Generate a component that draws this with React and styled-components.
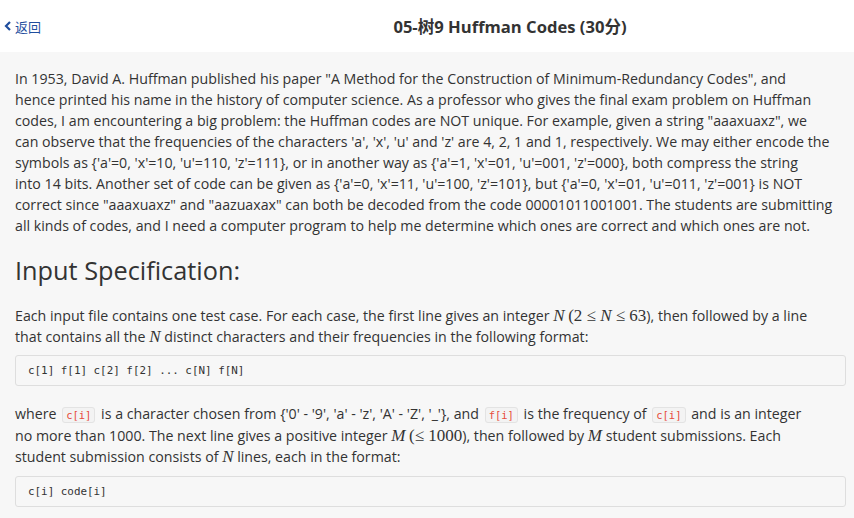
import React from "react";
import styled, { createGlobalStyle } from "styled-components";

const GlobalStyle = createGlobalStyle`
  html, body {
    margin: 0;
    padding: 0;
    background: #f7f7f7;
    font-family: "Open Sans", "Noto Sans", "Noto Sans CJK SC", sans-serif;
    color: #333;
  }
`;

const Header = styled.div`
  height: 52px;
  background: #fff;
  display: flex;
  align-items: center;
`;

const Back = styled.a`
  display: flex;
  align-items: center;
  gap: 3px;
  width: 166px;
  padding-left: 4px;
  box-sizing: border-box;
  color: #1f4e9e;
  font-size: 13px;
  font-family: "Noto Sans CJK SC", sans-serif;
  text-decoration: none;
  cursor: pointer;
`;

const Title = styled.h1`
  flex: 1;
  margin: 0;
  text-align: center;
  font-size: 16.6px;
  font-weight: 700;
  color: #333;
  font-family: "Open Sans", "Noto Sans CJK SC", sans-serif;
`;

const Content = styled.div`
  padding: 16px 0 0 15px;
`;

const Para = styled.p`
  margin: 0 0 ${(p) => p.$mb || 0}px;
  font-size: 14.2px;
  line-height: ${(p) => p.$lh || 21}px;
  white-space: nowrap;
`;

const Heading = styled.h2`
  margin: 18px 0 19px;
  font-size: 25.3px;
  font-weight: 400;
  line-height: 32px;
  color: #333;
`;

const CodeBlock = styled.pre`
  margin: 0 0 ${(p) => p.$mb || 0}px;
  padding: 8px 12px;
  height: 31px;
  box-sizing: border-box;
  background: #f7f7f7;
  border: 1px solid #dedede;
  border-radius: 3px;
  font-family: "DejaVu Sans Mono", "Liberation Mono", monospace;
  font-size: 10.9px;
  line-height: 14px;
  color: #333;
  width: 831px;
`;

const Code = styled.code`
  font-family: "DejaVu Sans Mono", "Liberation Mono", monospace;
  font-size: 10.5px;
  line-height: 1;
  color: #e74c3c;
  background: #f3f3f3;
  border: 1px solid #e3e3e3;
  border-radius: 3px;
  padding: 1px 3px;
  margin: 0 2px;
`;

const M = styled.span`
  font-family: "Liberation Serif", "DejaVu Serif", serif;
  font-style: ${(p) => (p.$up ? "normal" : "italic")};
  font-size: 17px;
  line-height: 1;
`;

export default function App() {
  return (
    <>
      <GlobalStyle />
      <Header>
        <Back>
          <svg width="8" height="10" viewBox="0 0 8 10">
            <path d="M6 1 L2 5 L6 9" stroke="#1f4e9e" strokeWidth="2.2" fill="none" />
          </svg>
          返回
        </Back>
        <Title>05-树9 Huffman Codes (30分)</Title>
      </Header>
      <Content>
        <Para>
          In 1953, David A. Huffman published his paper "A Method for the Construction of
          Minimum-Redundancy Codes", and
          <br />
          hence printed his name in the history of computer science. As a professor who gives the
          final exam problem on Huffman
          <br />
          codes, I am encountering a big problem: the Huffman codes are NOT unique. For example,
          given a string "aaaxuaxz", we
          <br />
          can observe that the frequencies of the characters 'a', 'x', 'u' and 'z' are 4, 2, 1 and
          1, respectively. We may either encode the
          <br />
          symbols as {"{"}'a'=0, 'x'=10, 'u'=110, 'z'=111{"}"}, or in another way as {"{"}'a'=1,
          'x'=01, 'u'=001, 'z'=000{"}"}, both compress the string
          <br />
          into 14 bits. Another set of code can be given as {"{"}'a'=0, 'x'=11, 'u'=100,
          'z'=101{"}"}, but {"{"}'a'=0, 'x'=01, 'u'=011, 'z'=001{"}"} is NOT
          <br />
          correct since "aaaxuaxz" and "aazuaxax" can both be decoded from the code
          00001011001001. The students are submitting
          <br />
          all kinds of codes, and I need a computer program to help me determine which ones are
          correct and which ones are not.
        </Para>
        <Heading>Input Specification:</Heading>
        <Para $mb={8}>
          Each input file contains one test case. For each case, the first line gives an integer{" "}
          <M>N</M> <M $up>(2 ≤ </M>
          <M>N</M>
          <M $up> ≤ 63</M>), then followed by a line
          <br />
          that contains all the <M>N</M> distinct characters and their frequencies in the
          following format:
        </Para>
        <CodeBlock $mb={17}>c[1] f[1] c[2] f[2] ... c[N] f[N]</CodeBlock>
        <Para $mb={8} $lh={21.5}>
          where <Code>c[i]</Code> is a character chosen from {"{"}'0' - '9', 'a' - 'z', 'A' - 'Z',
          '_'{"}"}, and <Code>f[i]</Code> is the frequency of <Code>c[i]</Code> and is an integer
          <br />
          no more than 1000. The next line gives a positive integer <M>M</M> <M $up>(≤ 1000</M>),
          then followed by <M>M</M> student submissions. Each
          <br />
          student submission consists of <M>N</M> lines, each in the format:
        </Para>
        <CodeBlock>c[i] code[i]</CodeBlock>
      </Content>
    </>
  );
}
